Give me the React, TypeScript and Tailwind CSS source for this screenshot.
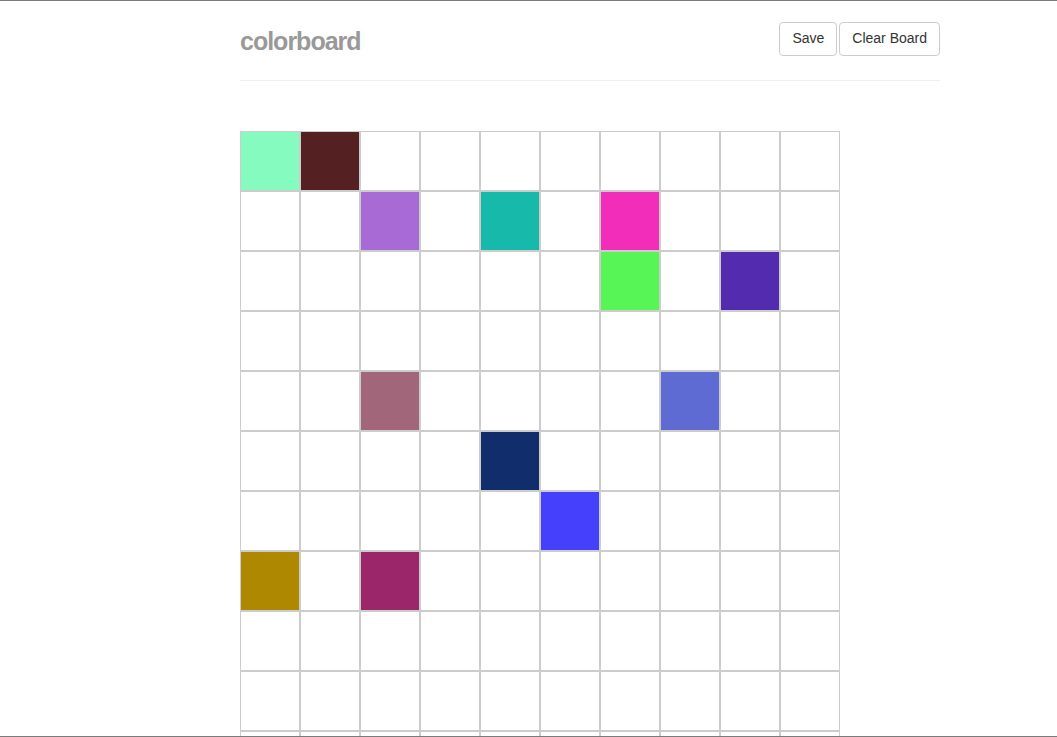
import React from "react";

const ROWS = 11;
const COLS = 10;

// painted cells, keyed by "row-col"
const PAINTED: Record<string, string> = {
  "0-0": "#86fbc0",
  "0-1": "#542022",
  "1-2": "#a86bd5",
  "1-4": "#17b9aa",
  "1-6": "#f22db9",
  "2-6": "#57f656",
  "2-8": "#522bae",
  "4-2": "#a1667a",
  "4-7": "#5d6bd3",
  "5-4": "#112d6b",
  "6-5": "#4440fc",
  "7-0": "#ae8800",
  "7-2": "#9b2669",
};

const Cell = ({ color }: { color?: string }) => (
  <div
    className="h-[60px] w-[60px] border border-[#cccccc] bg-white"
    style={color ? { backgroundColor: color } : undefined}
  />
);

export default function App() {
  const cells = [];
  for (let r = 0; r < ROWS; r++) {
    for (let c = 0; c < COLS; c++) {
      cells.push(<Cell key={`${r}-${c}`} color={PAINTED[`${r}-${c}`]} />);
    }
  }

  return (
    <div className="h-[737px] overflow-hidden border-y border-[#7b7b7b] bg-white font-['Liberation_Sans',Arial,sans-serif]">
      <div className="ml-[240px] w-[700px]">
        <div className="flex h-[34px] items-center justify-between mt-[21px]">
          <h1 className="mt-[6px] text-[25px] font-bold tracking-[-1px] text-[#999999]">colorboard</h1>
          <div className="flex gap-[2px]">
            <button className="h-[34px] rounded-[4px] border border-[#cccccc] bg-white px-3 pb-[1px] text-[14px] text-[#333333]">
              Save
            </button>
            <button className="h-[34px] rounded-[4px] border border-[#cccccc] bg-white px-3 pb-[1px] text-[14px] text-[#333333]">
              Clear Board
            </button>
          </div>
        </div>
        <hr className="mt-[24px] border-[#eeeeee]" />
        <div className="mt-[50px] grid w-[600px] grid-cols-[repeat(10,60px)]">
          {cells}
        </div>
      </div>
    </div>
  );
}
